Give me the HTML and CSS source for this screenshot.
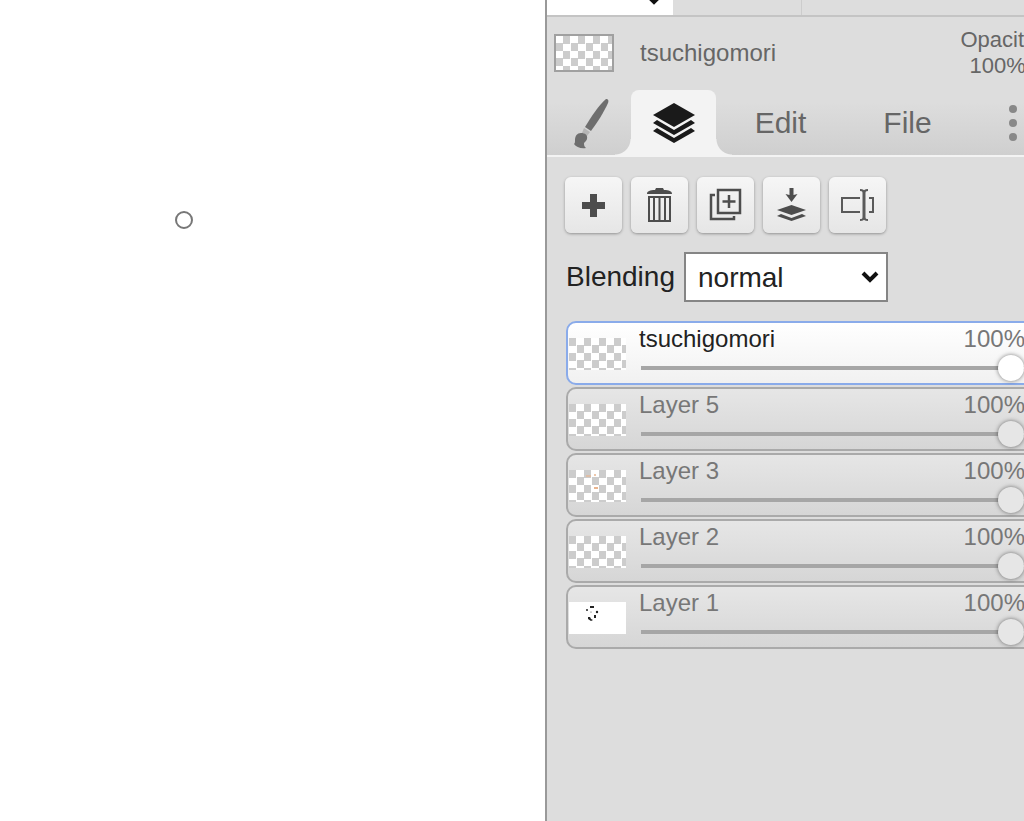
FILE: index.html
```html
<!DOCTYPE html>
<html lang="en">
<head>
	<meta charset="UTF-8">
	<title>Layers</title>
	<link rel="stylesheet" href="styles.css">
</head>
<body>
	<div class="app">
		<main class="canvas">
			<div class="brush-cursor"></div>
		</main>
		<aside class="panel">
			<div class="topbar">
				<button class="topbar-drop" aria-label="Zoom">
					<svg width="18" height="12" viewBox="0 0 18 12"><path d="M2 2l7 7 7-7" fill="none" stroke="#111" stroke-width="4"/></svg>
				</button>
				<div class="topbar-cell"></div>
				<div class="topbar-rest"></div>
			</div>
			<div class="header">
				<div class="header-thumb"></div>
				<div class="header-name">tsuchigomori</div>
				<div class="header-opacity">Opacity<br>100%</div>
			</div>
			<nav class="tabs">
				<button class="tab tab-brush" aria-label="Brush">
					<svg width="36" height="54" viewBox="0 0 36 54">
						<path d="M33 3c2 0 3 1 2 4-4 9-11 20-17 28l-6-4C18 21 26 9 33 3z" fill="#6e6e6e"/>
						<path d="M11 32l6 4-3 4-5-3z" fill="#b5b5b5"/>
						<path d="M8 37c4 0 7 2 6 6-1 3-3 3-3 5 0 2 1 3 2 4-5 1-10-1-12-4 1-1 1-2 1-4 0-4 2-7 6-7z" fill="#6e6e6e"/>
					</svg>
				</button>
				<button class="tab tab-layers active" aria-label="Layers">
					<svg width="42" height="40" viewBox="0 0 42 40" fill="#1a1a1a">
						<path d="M21 0l21 12-21 12L0 12z"/>
						<path d="M0 20l4-3 17 10 17-10 4 3-21 12z"/>
						<path d="M0 28l4-3 17 10 17-10 4 3-21 12z"/>
					</svg>
				</button>
				<button class="tab tab-text">Edit</button>
				<button class="tab tab-text">File</button>
				<button class="tab tab-more" aria-label="More">
					<svg width="10" height="38" viewBox="0 0 10 38" fill="#888"><circle cx="5" cy="5" r="4"/><circle cx="5" cy="19" r="4"/><circle cx="5" cy="33" r="4"/></svg>
				</button>
			</nav>
			<div class="content">
				<div class="tools">
					<button class="tool" aria-label="New layer">
						<svg width="36" height="36" viewBox="0 0 36 36"><path d="M14 7h7v8h8v7h-8v8h-7v-8H6v-7h8z" fill="#4d4d4d"/></svg>
					</button>
					<button class="tool" aria-label="Remove layer">
						<svg width="36" height="36" viewBox="1 0 36 36" fill="none" stroke="#4d4d4d" stroke-width="2">
							<path d="M6 7c0-3 3-4 8-4l1-2h7l1 2c5 0 8 1 8 4z" fill="#4d4d4d" stroke="none"/>
							<path d="M8 10h21v24H8zM13 10v24M18.500 10v24M24 10v24"/>
						</svg>
					</button>
					<button class="tool" aria-label="Duplicate layer">
						<svg width="36" height="36" viewBox="1 1 36 36" fill="none" stroke="#4d4d4d" stroke-width="2.500">
							<path d="M11 4h22v23H11zM8 9H4v24h23v-3"/>
							<path d="M22 9v13M15.500 15.500h13"/>
						</svg>
					</button>
					<button class="tool" aria-label="Merge down">
						<svg width="36" height="36" viewBox="1 1 36 36" fill="#4d4d4d">
							<path d="M16.500 2h4v7l4-1-6 8-6-8 4 1z"/>
							<path d="M18.500 19L33 24l-14.500 5L4 24z"/>
							<path d="M4 30l4-2 10.500 4 10.500-4 4 2-14.500 5z"/>
						</svg>
					</button>
					<button class="tool" aria-label="Rename layer">
						<svg width="36" height="36" viewBox="1 0 36 36" fill="none" stroke="#5a5a5a" stroke-width="2">
							<path d="M21 11H3v14h18M30 11h4v14h-4"/>
							<path d="M21 3c3 0 4 1 4 3 0-2 1-3 4-3M21 33c3 0 4-1 4-3 0 2 1 3 4 3"/>
							<path d="M25 4v28" stroke-width="3"/>
						</svg>
					</button>
				</div>
				<div class="blending">
					<label for="blend">Blending</label>
					<div class="select-wrap">
						<select id="blend">
							<option>normal</option>
							<option>darken</option>
							<option>multiply</option>
							<option>screen</option>
						</select>
						<svg class="select-arrow" width="18" height="12" viewBox="0 0 18 12"><path d="M2 2l7 7 7-7" fill="none" stroke="#111" stroke-width="4"/></svg>
					</div>
				</div>
				<div class="layers">
					<div class="layer selected">
						<div class="thumb"></div>
						<div class="layer-body">
							<div class="layer-text"><label for="l6">tsuchigomori</label><span class="percent">100%</span></div>
							<input id="l6" type="range" value="100">
						</div>
					</div>
					<div class="layer">
						<div class="thumb"></div>
						<div class="layer-body">
							<div class="layer-text"><label for="l5">Layer 5</label><span class="percent">100%</span></div>
							<input id="l5" type="range" value="100">
						</div>
					</div>
					<div class="layer">
						<div class="thumb">
							<svg width="57" height="32" viewBox="0 0 57 32" fill="#e9b48e"><rect x="17" y="5" width="5" height="2" opacity=".6"/><circle cx="26" cy="5" r="1"/><rect x="25" y="17" width="4" height="2"/></svg>
						</div>
						<div class="layer-body">
							<div class="layer-text"><label for="l3">Layer 3</label><span class="percent">100%</span></div>
							<input id="l3" type="range" value="100">
						</div>
					</div>
					<div class="layer">
						<div class="thumb"></div>
						<div class="layer-body">
							<div class="layer-text"><label for="l2">Layer 2</label><span class="percent">100%</span></div>
							<input id="l2" type="range" value="100">
						</div>
					</div>
					<div class="layer">
						<div class="thumb filled">
							<svg width="57" height="32" viewBox="0 0 57 32" fill="#222"><rect x="21" y="4" width="4" height="2"/><circle cx="18" cy="8" r="1"/><circle cx="28" cy="10" r="1.200"/><circle cx="22" cy="10" r=".5"/><rect x="25" y="13" width="2" height="3"/><path d="M19 15l2 0 1 2 2 1-2 1-3-2z"/></svg>
						</div>
						<div class="layer-body">
							<div class="layer-text"><label for="l1">Layer 1</label><span class="percent">100%</span></div>
							<input id="l1" type="range" value="100">
						</div>
					</div>
				</div>
			</div>
		</aside>
	</div>
</body>
</html>
```
FILE: styles.css
```css
*{margin:0;padding:0;box-sizing:border-box;}
body{
	font-family:"Liberation Sans", Arial, sans-serif;
	font-size:24px;
	line-height:24px;
	color:#666;
	background:#fff;
	overflow:hidden;
}
button{
	border:0;
	background:none;
	font:inherit;
	color:inherit;
}
svg{display:block;}
.app{
	display:flex;
	min-height:100vh;
}
.canvas{
	flex:1 0 545px;
	position:relative;
	background:#fff;
}
.brush-cursor{
	position:absolute;
	left:175px;
	top:211px;
	width:18px;
	height:18px;
	border:2px solid #777;
	border-radius:50%;
}
.panel{
	flex:none;
	width:542px;
	border-left:2px solid #999;
	background:#ddd;
}

/* top bar */
.topbar{
	display:flex;
	height:17px;
	border-bottom:2px solid #c4c4c4;
}
.topbar-drop{
	display:flex;
	align-items:flex-end;
	justify-content:flex-end;
	width:126px;
	padding:0 10px 0 0;
	background:#fff;
	overflow:hidden;
}
.topbar-drop svg{margin-bottom:10px;}
.topbar-cell{
	width:129px;
	border-right:1px solid #ccc;
}
.topbar-rest{flex:1;}

/* current layer */
.header{
	display:flex;
	align-items:center;
	height:72px;
	padding:0 52px 0 7px;
}
.header-thumb,
.thumb{
	background:conic-gradient(#fff 25%, #ccc 0 50%, #fff 0 75%, #ccc 0) 0 0/15px 15px;
}
.header-thumb{
	width:60px;
	height:38px;
	border:2px solid #a0a0a0;
	background-position:7px 0;
}
.header-name{
	flex:1;
	padding-left:26px;
}
.header-opacity{
	font-size:22px;
	line-height:26px;
	text-align:center;
}

/* tabs */
.tabs{
	display:flex;
	height:68px;
	padding-top:1px;
	border-bottom:2px solid #f3f3f3;
	background:linear-gradient(#ddd 20%, #cfcfcf);
}
.tab{
	display:flex;
	align-items:center;
	justify-content:center;
}
.tab-brush{width:84px;padding-left:4px;}
.tab-layers{width:85px;}
.tab-text{
	width:127px;
	padding-left:2px;
	font-size:30px;
}
.tab-more{width:86px;}
.active{
	position:relative;
	border-radius:8px 8px 0 0;
	background:#f3f3f3;
}
.active::before,
.active::after{
	content:"";
	position:absolute;
	bottom:0;
	width:16px;
	height:16px;
}
.active::before{
	right:100%;
	background:radial-gradient(circle at 0 0, transparent 15px, #f3f3f3 16px);
}
.active::after{
	left:100%;
	background:radial-gradient(circle at 100% 0, transparent 15px, #f3f3f3 16px);
}

.content{
	padding:20px 18px;
}
.tools{
	display:flex;
	gap:9px;
}
.tool{
	display:flex;
	align-items:center;
	justify-content:center;
	width:57px;
	height:56px;
	border-radius:6px;
	background:linear-gradient(#f6f6f6, #e6e6e6);
	box-shadow:0 1px 3px rgba(0,0,0,.35);
}
.blending{
	display:flex;
	align-items:center;
	gap:9px;
	margin-top:19px;
	padding-left:1px;
	font-size:28px;
	line-height:32px;
	color:#222;
}
.select-wrap{position:relative;}
.blending select{
	display:block;
	appearance:none;
	width:204px;
	height:50px;
	padding:1px 0 0 12px;
	border:2px solid #858585;
	background:#fff;
	font:inherit;
	color:inherit;
}
.select-arrow{
	position:absolute;
	right:9px;
	top:19px;
	pointer-events:none;
}

/* layer list */
.layers{
	display:flex;
	flex-direction:column;
	gap:2px;
	margin-top:19px;
	padding:0 1px;
}
.layer{
	display:flex;
	align-items:center;
	gap:13px;
	height:64px;
	padding:2px 41px 0 1px;
	border:2px solid #aaa;
	border-radius:10px;
	background:linear-gradient(#e6e6e6, #d6d6d6);
	color:#777;
}
.selected{
	border-color:#8aabea;
	background:linear-gradient(#fff, #f1f1f1);
}
.selected label{color:#222;}
.thumb{
	width:57px;
	height:32px;
}
.filled{background:#fff;}
.layer-body{flex:1;}
.layer-text{
	display:flex;
	justify-content:space-between;
}
.percent{color:#777;}
input[type=range]{
	display:block;
	appearance:none;
	width:calc(100% - 3px);
	height:26px;
	margin:4px 0 0 2px;
	background:linear-gradient(#a6a6a6, #a6a6a6) center/100% 4px no-repeat;
}
input[type=range]::-webkit-slider-thumb{
	appearance:none;
	width:26px;
	height:26px;
	border-radius:50%;
	background:#e6e6e6;
	box-shadow:0 0 4px rgba(0,0,0,.5);
}
.selected input[type=range]::-webkit-slider-thumb{background:#fff;}
```
